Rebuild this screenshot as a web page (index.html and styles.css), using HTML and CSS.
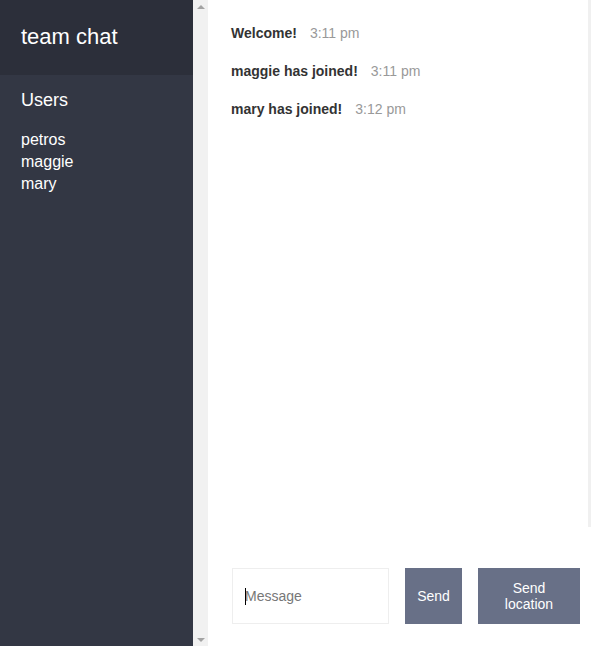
FILE: index.html
```html
<!DOCTYPE html>
<html>
<head>
<meta charset="utf-8">
<title>team chat</title>
<link rel="stylesheet" href="styles.css">
</head>
<body>
<div class="chat">
  <aside class="sidebar">
    <div class="room">team chat</div>
    <div class="users">
      <h3 class="users-title">Users</h3>
      <ul class="user-list">
        <li>petros</li>
        <li>maggie</li>
        <li>mary</li>
      </ul>
    </div>
  </aside>
  <div class="scrollbar">
    <span class="arrow arrow-up"></span>
    <span class="arrow arrow-down"></span>
  </div>
  <main class="main">
    <div class="messages">
      <div class="message"><span class="name">Welcome!</span><span class="time">3:11 pm</span></div>
      <div class="message"><span class="name">maggie has joined!</span><span class="time">3:11 pm</span></div>
      <div class="message"><span class="name">mary has joined!</span><span class="time">3:12 pm</span></div>
    </div>
    <div class="footer">
      <form class="compose">
        <label class="field">
          <input class="input" type="text" placeholder="Message">
          <span class="caret"></span>
        </label>
        <button class="btn btn-send" type="button">Send</button>
      </form>
      <button class="btn btn-location" type="button">Send location</button>
    </div>
  </main>
</div>
</body>
</html>
```
FILE: styles.css
```css
* { box-sizing: border-box; }
html, body { margin: 0; padding: 0; height: 100%; }
body {
  font-family: "Liberation Sans", Arial, sans-serif;
  color: #333;
  background: #fff;
}
.chat {
  display: flex;
  height: 646px;
}
.sidebar {
  width: 193px;
  flex: none;
  height: 100%;
  background: #333744;
  color: #fff;
}
.scrollbar {
  width: 15px;
  flex: none;
  background: #f1f1f1;
  display: flex;
  flex-direction: column;
  justify-content: space-between;
  align-items: center;
  padding: 5px 0 4px;
}
.arrow {
  width: 0;
  height: 0;
  border-left: 4px solid transparent;
  border-right: 4px solid transparent;
}
.arrow-up { border-bottom: 4px solid #a3a3a3; }
.arrow-down { border-top: 4px solid #a3a3a3; }
.room {
  height: 75px;
  background: #2c2f3a;
  font-size: 22px;
  line-height: 26px;
  padding: 24px 21px 0;
}
.users { padding: 16px 21px 0; }
.users-title {
  margin: 0 0 20px;
  font-size: 18px;
  line-height: 18px;
  font-weight: normal;
}
.user-list {
  list-style: none;
  margin: 0;
  padding: 0;
  font-size: 16px;
  line-height: 22px;
}
.main {
  flex: 1;
  display: flex;
  flex-direction: column;
  min-width: 0;
}
.messages {
  height: 527px;
  flex: none;
  padding: 25px 0 0 23px;
  border-right: 3px solid #f0f0f0;
}
.message {
  font-size: 14px;
  line-height: 16px;
  margin-bottom: 22px;
}
.name { font-weight: bold; color: #333; }
.time { color: #999; margin-left: 13px; }
.footer {
  flex: 1;
  display: flex;
  gap: 16px;
  padding: 41px 0 0 24px;
}
.compose {
  display: flex;
  gap: 16px;
  margin: 0;
}
.field {
  position: relative;
  display: block;
}
.input {
  display: block;
  width: 157px;
  height: 56px;
  border: 1px solid #eee;
  padding: 0 12px;
  font-family: inherit;
  font-size: 14px;
  color: #333;
  outline: none;
}
.input::placeholder { color: #777; }
.caret {
  position: absolute;
  left: 13px;
  top: 20px;
  width: 1px;
  height: 17px;
  background: #000;
}
.btn {
  height: 56px;
  border: none;
  background: #687087;
  color: #fff;
  font-family: inherit;
  font-size: 14px;
  line-height: 16px;
  padding: 0;
  cursor: pointer;
}
.btn-send { width: 57px; }
.btn-location { width: 102px; padding: 0 20px; }
```
